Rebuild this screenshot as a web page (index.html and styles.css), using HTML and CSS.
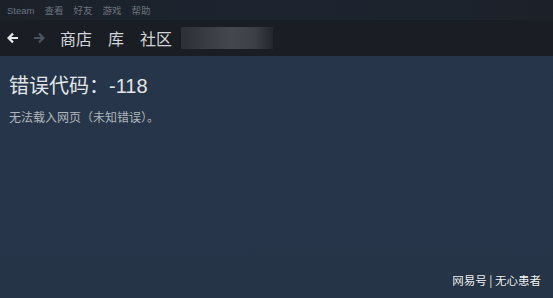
FILE: index.html
```html
<!DOCTYPE html>
<html lang="zh">
<head>
<meta charset="utf-8">
<link rel="stylesheet" href="styles.css">
</head>
<body>
<div class="app">
  <div class="menubar">
    <span class="mi">Steam</span>
    <span class="mi">查看</span>
    <span class="mi">好友</span>
    <span class="mi">游戏</span>
    <span class="mi">帮助</span>
  </div>
  <div class="navbar">
    <svg class="arrow back" width="12" height="12" viewBox="0 0 12 12"><path d="M11 6H2.2M6 1.6L1.6 6L6 10.4" fill="none" stroke="#e8eaec" stroke-width="2.2"/></svg>
    <svg class="arrow fwd" width="12" height="12" viewBox="0 0 12 12"><path d="M1 6H9.8M6 1.6L10.4 6L6 10.4" fill="none" stroke="#4a5361" stroke-width="2.2"/></svg>
    <span class="tab">商店</span>
    <span class="tab">库</span>
    <span class="tab">社区</span>
    <span class="blur"></span>
  </div>
  <div class="content">
    <h1 class="title">错误代码：-118</h1>
    <p class="msg">无法载入网页（未知错误）。</p>
    <div class="watermark">网易号 | 无心患者</div>
  </div>
</div>
</body>
</html>
```
FILE: styles.css
```css
html, body {
  margin: 0;
  padding: 0;
  width: 553px;
  height: 298px;
  overflow: hidden;
}
body {
  font-family: "Liberation Sans", Arial, "Noto Sans CJK SC", sans-serif;
  background: #253448;
}
.app {
  display: flex;
  flex-direction: column;
  height: 298px;
}
.menubar {
  height: 20px;
  background: linear-gradient(90deg, #1c2129 0%, #1d2430 50%, #1c2129 100%);
  display: flex;
  align-items: center;
  gap: 10px;
  padding-left: 7px;
  font-size: 9.5px;
  color: #6a737e;
}
.navbar {
  height: 36px;
  background: #1a1d24;
  display: flex;
  align-items: center;
  padding-left: 7px;
}
.arrow { flex: none; }
.arrow.fwd { margin-left: 14px; }
.tab {
  font-size: 16px;
  color: #d2d6da;
  font-family: "Noto Sans CJK SC", sans-serif;
}
.arrow.fwd + .tab { margin-left: 15px; }
.tab + .tab { margin-left: 16px; }
.blur {
  margin-left: 9px;
  width: 92px;
  height: 22px;
  background: linear-gradient(90deg, #2c2f36 0%, #3a3d44 30%, #44474d 55%, #3c3f45 80%, #23262c 100%);
}
.content {
  flex: 1;
  position: relative;
  padding: 16px 9px 0;
  background: linear-gradient(180deg, #263549 0%, #253447 100%);
}
.title {
  margin: 0;
  font-size: 20px;
  font-weight: normal;
  color: #e2e5e8;
  line-height: 28px;
  font-family: "Liberation Sans", "Noto Sans CJK SC", sans-serif;
}
.msg {
  margin: 9px 0 0;
  font-size: 12px;
  color: #b0b6bc;
  line-height: 16px;
  font-family: "Noto Sans CJK SC", sans-serif;
}
.watermark {
  position: absolute;
  right: 12px;
  bottom: 10px;
  font-size: 11.5px;
  color: #f4f6f8;
  font-family: "Noto Sans CJK SC", sans-serif;
  text-shadow: 0 0 1px rgba(0,0,0,0.6);
}
```
